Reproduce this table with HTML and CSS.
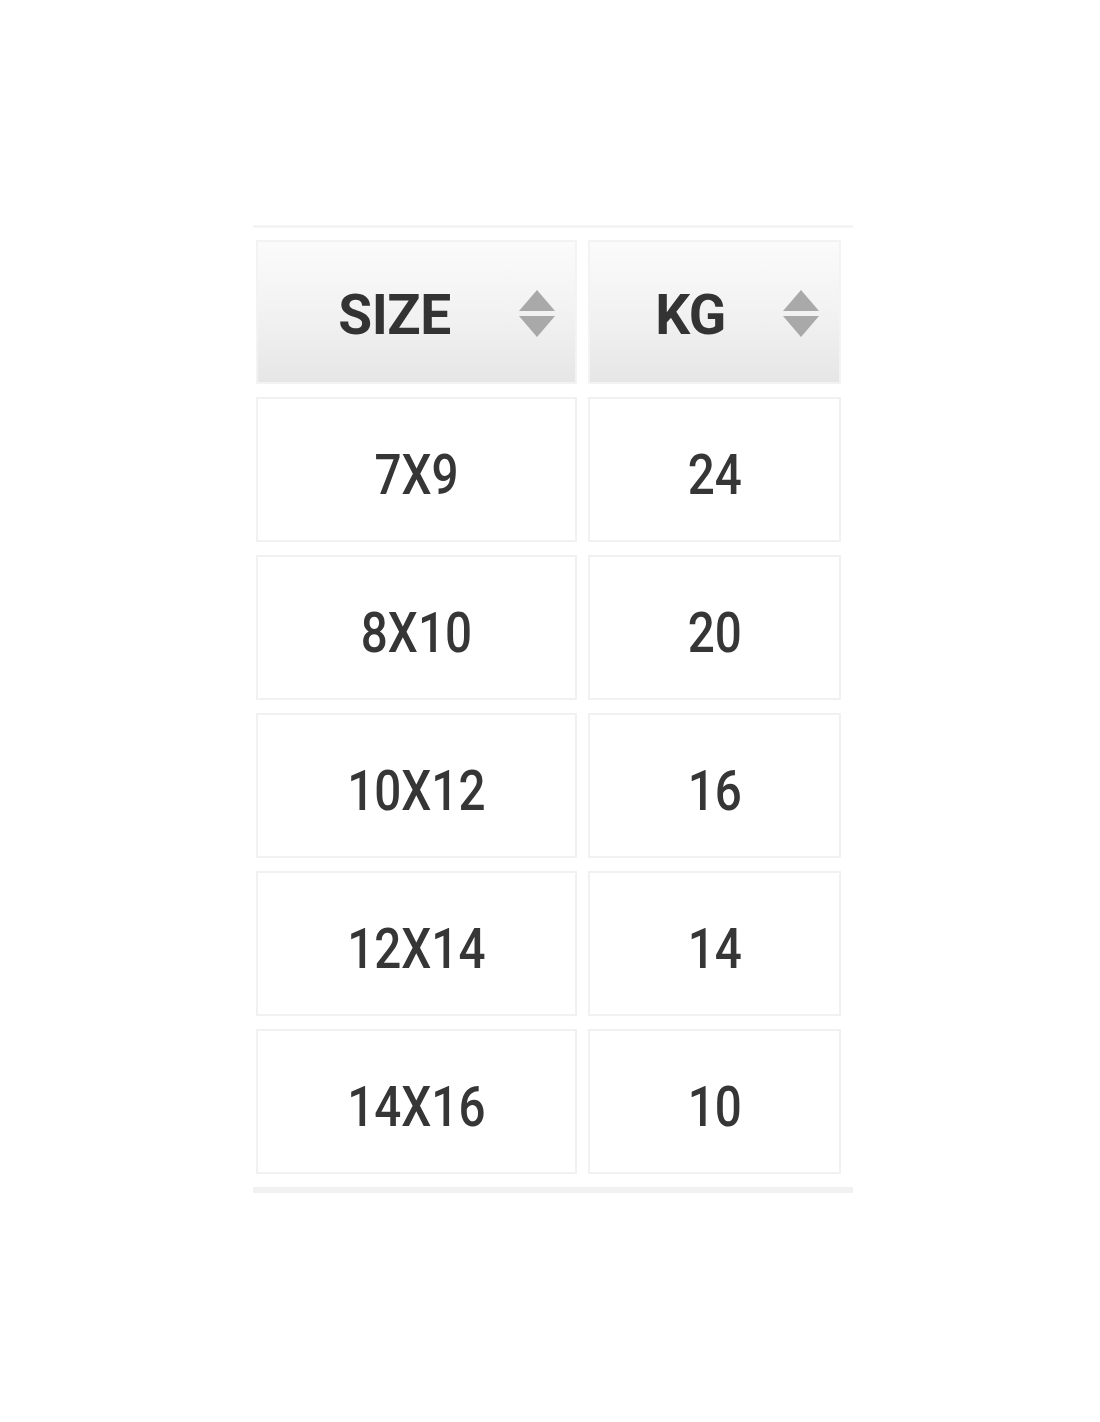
FILE: index.html
```html
<!DOCTYPE html>
<html>
<head>
<meta charset="utf-8">
<link rel="stylesheet" href="styles.css">
</head>
<body>
<div class="wrap">
  <div class="table">
    <div class="cell head head-size"><span class="htext">SIZE</span><span class="sort"><i class="up"></i><i class="down"></i></span></div>
    <div class="cell head head-kg"><span class="htext">KG</span><span class="sort"><i class="up"></i><i class="down"></i></span></div>
    <div class="cell"><span class="val">7X9</span></div>
    <div class="cell"><span class="val">24</span></div>
    <div class="cell"><span class="val">8X10</span></div>
    <div class="cell"><span class="val">20</span></div>
    <div class="cell"><span class="val">10X12</span></div>
    <div class="cell"><span class="val">16</span></div>
    <div class="cell"><span class="val">12X14</span></div>
    <div class="cell"><span class="val">14</span></div>
    <div class="cell"><span class="val">14X16</span></div>
    <div class="cell"><span class="val">10</span></div>
  </div>
</div>
</body>
</html>
```
FILE: styles.css
```css
html, body {
  margin: 0;
  padding: 0;
  background: #ffffff;
}
body {
  font-family: Roboto, "Liberation Sans", sans-serif;
  color: #333333;
}
.wrap {
  padding-top: 225px;
  padding-left: 253px;
}
.table {
  width: 600px;
  box-sizing: border-box;
  border-top: 3px solid #f4f4f4;
  border-bottom: 6px solid #f1f1f1;
  padding: 12px 0 13px 3px;
  display: grid;
  grid-template-columns: 321px 253px;
  grid-template-rows: 144px repeat(5, 145px);
  column-gap: 11px;
  row-gap: 13px;
}
.cell {
  box-sizing: border-box;
  border: 2px solid #f1f1f1;
  background: #ffffff;
  display: flex;
  align-items: center;
  justify-content: center;
  position: relative;
}
.val {
  display: inline-block;
  font-size: 56px;
  font-weight: 500;
  color: #363636;
  transform: scaleX(0.85);
  padding-top: 10px;
}
.head {
  background: linear-gradient(to bottom, #fbfbfb 0%, #f1f1f1 55%, #e6e6e6 100%);
  border-color: #f3f3f3;
  padding-right: 44px;
}
.head-kg {
  padding-right: 48px;
}
.htext {
  font-size: 55px;
  font-weight: 700;
  color: #333333;
  padding-top: 6px;
  letter-spacing: -0.5px;
}
.sort {
  position: absolute;
  right: 20px;
  top: 48px;
  width: 36px;
  height: 47px;
  display: flex;
  flex-direction: column;
  justify-content: space-between;
}
.sort .up {
  display: block;
  width: 0;
  height: 0;
  border-left: 18px solid transparent;
  border-right: 18px solid transparent;
  border-bottom: 21px solid #a9a9a9;
}
.sort .down {
  display: block;
  width: 0;
  height: 0;
  border-left: 18px solid transparent;
  border-right: 18px solid transparent;
  border-top: 21px solid #a9a9a9;
}
```
